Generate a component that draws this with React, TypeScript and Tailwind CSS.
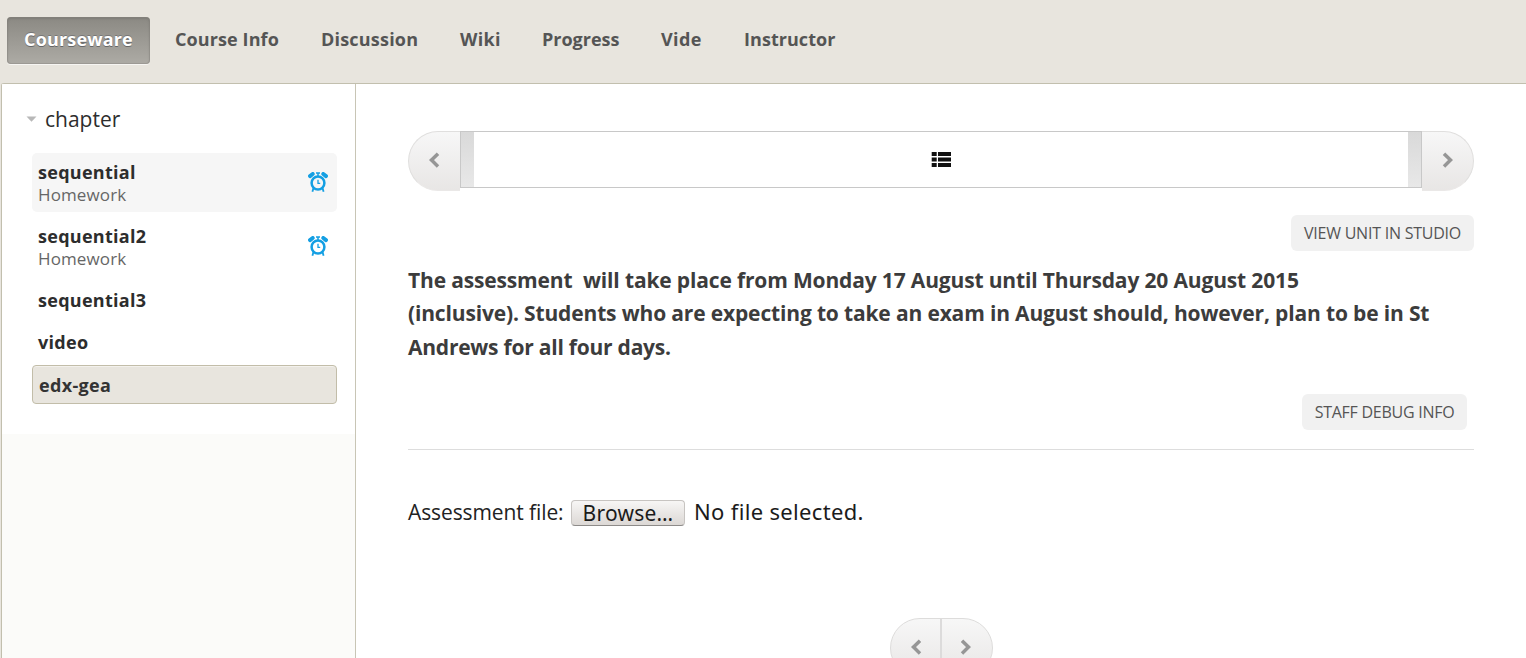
import React from "react";

const tabs = [
  { label: "Course Info", style: "w-[104px] tracking-[0.1px]" },
  { label: "Discussion", style: "w-[97px] tracking-[0.2px]" },
  { label: "Wiki", style: "w-[40px] tracking-[0.3px]" },
  { label: "Progress", style: "w-[77px]" },
  { label: "Vide", style: "w-[41px] tracking-[0.4px]" },
  { label: "Instructor", style: "w-[92px] tracking-[0.05px]" },
];

function Chevron({ flip = false }: { flip?: boolean }) {
  return (
    <svg width="12" height="16" viewBox="0 0 12 16" className={flip ? "-scale-x-100" : ""}>
      <path d="M10 1.7 3.5 8.1l6.5 6.3" fill="none" stroke="#969696" strokeWidth="3.5" />
    </svg>
  );
}

function AlarmClock() {
  return (
    <svg width="20" height="20" viewBox="0 0 20 20" fill="none" stroke="#149fe3" className="relative -top-px">
      <circle cx="10" cy="11" r="6.4" strokeWidth="2.5" />
      <path d="M10 7.8V11.4H12.2" strokeWidth="1.3" />
      <path d="M8 1.1H12M10 1V4.5" strokeWidth="1.5" />
      <path d="M2 4.1 4.7 2M18 4.1 15.3 2" strokeWidth="4" strokeLinecap="round" />
      <path d="M5.5 16 4.4 19.7M14.5 16l1.1 3.7" strokeWidth="1.8" />
    </svg>
  );
}

function Homework({ title, active = false }: { title: string; active?: boolean }) {
  return (
    <a className={`flex h-[59px] items-center justify-between rounded-[5px] pl-1.5 pr-[9px] ${active ? "bg-[#f6f6f6]" : ""}`}>
      <span className="flex flex-col pt-0.5">
        <span className="text-[18px] font-bold leading-[23px] tracking-[0.28px] text-[#2d2d2d]">{title}</span>
        <span className="-mt-px pb-px text-[17px] leading-[23px] tracking-[0.12px] text-[#666]">Homework</span>
      </span>
      <AlarmClock />
    </a>
  );
}

export default function App() {
  return (
    <div className="flex h-[658px] flex-col overflow-hidden bg-[#e8e5de] font-['Open_Sans',sans-serif]">
      <nav className="flex h-[83px] shrink-0 items-start pl-[7px] pt-[17px] text-[18px] font-bold text-[#555]">
        <a className="flex h-[47px] w-[143px] items-center justify-center rounded-[4px] bg-linear-to-b from-[#8b8983] to-[#adaba5] pb-0.5 tracking-[0.15px] text-white shadow-[inset_0_0_0_1px_#88868060,inset_0_1px_2px_1px_#00000018,0_1px_0_#f6f5f2] [text-shadow:0_-1px_0_#777,0_1px_0_#666]">
          Courseware
        </a>
        <div className="ml-[25px] flex h-[45px] items-center gap-[42px] whitespace-nowrap">
          {tabs.map((tab) => (
            <a key={tab.label} className={tab.style}>{tab.label}</a>
          ))}
        </div>
      </nav>
      <div className="ml-px flex min-h-0 flex-1 rounded-tl-[3px] border-l border-t border-[#c2bfae] bg-white">
        <aside className="flex w-[354px] shrink-0 flex-col border-r border-[#c8c5b5] bg-[#fbfbf9]">
          <div className="h-[350px] rounded-tl-[3px] bg-white pl-[30px] pr-[18px]">
            <h3 className="-ml-[7px] flex h-[69px] items-center gap-2 text-[21px] text-[#2d2d2d]">
              <svg width="12" height="8" viewBox="0 0 12 8"><path d="M1.5 1.5h10L6.5 6.8z" fill="#b8b8b8" /></svg>
              <span className="pt-0.5">chapter</span>
            </h3>
            <div className="flex flex-col gap-[5px]">
              <Homework title="sequential" active />
              <Homework title="sequential2" />
            </div>
            <div className="pl-1.5 text-[18px] font-bold tracking-[0.28px] text-[#2d2d2d]">
              <a className="flex h-[47px] items-center pt-0.5">sequential3</a>
              <a className="flex h-[42px] items-center pb-[3px]">video</a>
            </div>
            <a className="flex h-[39px] items-center rounded-[4px] border border-[#c2bda9] bg-[#e8e5de] pl-1.5 pt-0.5 text-[18px] font-bold tracking-[0.32px] text-[#333] shadow-[inset_0_1px_0_#f3f1ec]">
              edx-gea
            </a>
          </div>
        </aside>
        <main className="flex min-w-0 flex-1 flex-col pl-[52px] pr-[52px] pt-[47px]">
          <div className="flex h-[60px] shrink-0 items-start">
            <a className="flex h-[60px] w-[52px] items-center justify-center rounded-l-[30px] border border-r-0 border-[#e0dfde] border-b-[#eae8e7] bg-linear-to-b from-[#f7f7f7] to-[#e8e6e5] pb-0.5 pr-0.5">
              <Chevron />
            </a>
            <div className="flex h-[57px] min-w-0 flex-1 justify-between border border-[#c8c8c8]">
              <div className="w-[13px] bg-linear-to-b from-[#d9d9d9] to-[#e8e8e8]" />
              <svg width="20" height="16" viewBox="0 0 20 16" className="mt-5" fill="#111">
                <path d="M.7 0h5v4h-5zM7 0h13v4H7zM.7 5.5h5v4h-5zM7 5.5h13v4H7zM.7 11h5v4h-5zM7 11h13v4H7z" />
              </svg>
              <div className="w-[13px] bg-linear-to-b from-[#d9d9d9] to-[#e8e8e8]" />
            </div>
            <a className="flex h-[60px] w-[52px] items-center justify-center rounded-r-[30px] border border-l-0 border-[#e0dfde] border-b-[#eae8e7] bg-linear-to-b from-[#f7f7f7] to-[#e8e6e5] pb-0.5">
              <Chevron flip />
            </a>
          </div>
          <a className="mt-6 flex h-9 w-[183px] shrink-0 items-center justify-center self-end whitespace-nowrap rounded-[6px] bg-[#f1f1f1] text-[16px] tracking-[-0.23px] text-[#555]">VIEW UNIT IN STUDIO</a>
          <p className="mt-[12.5px] whitespace-nowrap text-[21px] font-bold leading-[33.6px] tracking-[-0.155px] text-[#3c3c3c]">
            The assessment&nbsp; will take place from Monday 17 August until Thursday 20 August 2015<br />
            (inclusive). Students who are expecting to take an exam in August should, however, plan to be in St<br />
            <span className="tracking-[-0.23px]">Andrews for all four days.</span>
          </p>
          <a className="mr-[7px] mt-[29.5px] flex h-9 w-[165px] shrink-0 items-center justify-center self-end whitespace-nowrap rounded-[6px] bg-[#f1f1f1] text-[16px] tracking-[-0.26px] text-[#555]">STAFF DEBUG INFO</a>
          <div className="mt-[19px] h-px shrink-0 bg-[#ddd]" />
          <div className="mt-[46px] flex h-8 shrink-0 items-center whitespace-nowrap text-[21px] text-[#222]">
            <span className="w-[163px] pt-0.5 tracking-[-0.1px]">Assessment file:</span>
            <button className="mt-0.5 flex h-[26px] w-[114px] items-center justify-center rounded-[4px] border border-[#c7c4c1] border-b-[#8d8b89] bg-linear-to-b from-[#f7f6f5] to-[#dcd8d5] font-['Noto_Sans',sans-serif] text-[21px] leading-6 tracking-[0.24px] text-[#1b1b1b]">Browse…</button>
            <span className="ml-[9px] font-['Noto_Sans',sans-serif] text-[22px] tracking-[0.33px] text-[#1b1b1b]">No file selected.</span>
          </div>
          <div className="ml-[482px] mt-[90px] flex h-[60px] w-[103px] shrink-0 overflow-hidden rounded-[30px] border border-[#dddcdb] bg-linear-to-b from-[#f7f7f7] to-[#e8e6e5]">
            <a className="flex w-[51px] items-center justify-center border-r-2 border-[#dcdbdb] pb-0.5"><Chevron /></a>
            <a className="flex flex-1 items-center justify-center pb-0.5 pr-0.5"><Chevron flip /></a>
          </div>
        </main>
      </div>
    </div>
  );
}
